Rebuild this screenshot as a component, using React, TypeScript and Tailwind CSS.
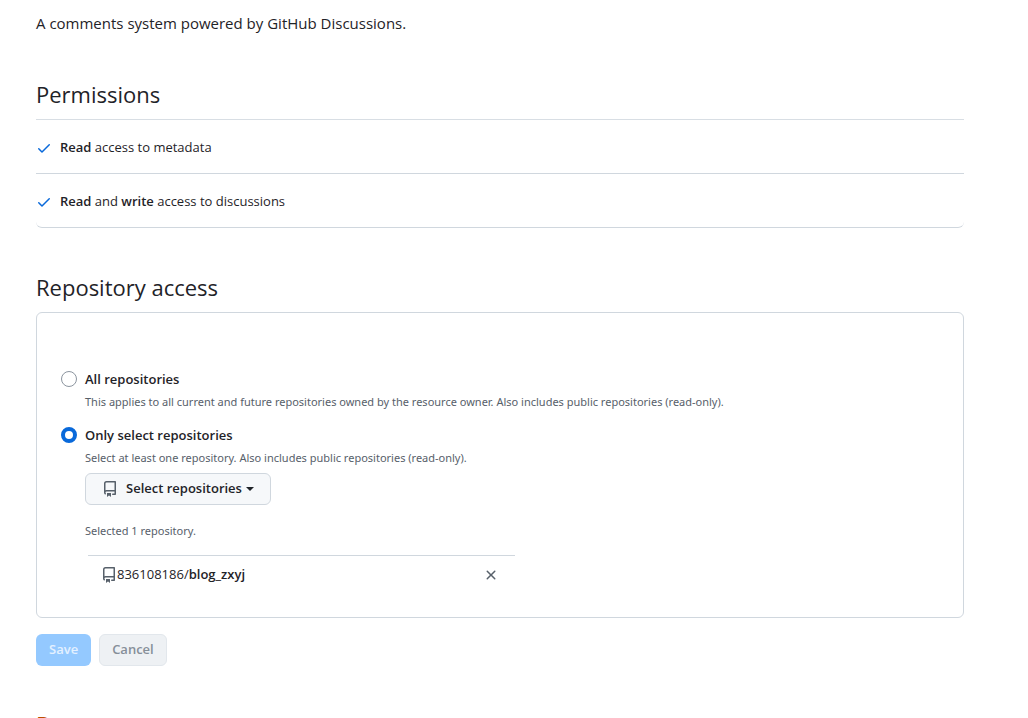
import { useState } from "react";
import type { ReactNode } from "react";

function CheckIcon() {
  return (
    <svg viewBox="0 0 16 16" className="h-4 w-4 shrink-0 fill-[#0969da]" aria-hidden="true">
      <path d="M13.78 4.22a.75.75 0 0 1 0 1.06l-7.25 7.25a.75.75 0 0 1-1.06 0L2.22 9.28a.751.751 0 0 1 .018-1.042.751.751 0 0 1 1.042-.018L6 10.94l6.72-6.72a.75.75 0 0 1 1.06 0Z" />
    </svg>
  );
}

function RepoIcon() {
  return (
    <svg viewBox="0 0 16 16" className="h-4 w-4 shrink-0 fill-[#57606a]" aria-hidden="true">
      <path d="M2 2.5A2.5 2.5 0 0 1 4.5 0h8.75a.75.75 0 0 1 .75.75v12.5a.75.75 0 0 1-.75.75h-2.5a.75.75 0 0 1 0-1.5h1.75v-2h-8a1 1 0 0 0-.714 1.7.75.75 0 1 1-1.072 1.05A2.495 2.495 0 0 1 2 11.5Zm10.5-1h-8a1 1 0 0 0-1 1v6.708A2.486 2.486 0 0 1 4.5 9h8ZM5 12.25a.25.25 0 0 1 .25-.25h3.5a.25.25 0 0 1 .25.25v3.25a.25.25 0 0 1-.4.2l-1.45-1.087a.249.249 0 0 0-.3 0L5.4 15.7a.25.25 0 0 1-.4-.2Z" />
    </svg>
  );
}

function CloseIcon() {
  return (
    <svg viewBox="0 0 16 16" className="h-4 w-4 fill-[#57606a]" aria-hidden="true">
      <path d="M3.72 3.72a.75.75 0 0 1 1.06 0L8 6.94l3.22-3.22a.749.749 0 0 1 1.275.326.749.749 0 0 1-.215.734L9.06 8l3.22 3.22a.749.749 0 0 1-.326 1.275.749.749 0 0 1-.734-.215L8 9.06l-3.22 3.22a.751.751 0 0 1-1.042-.018.751.751 0 0 1-.018-1.042L6.94 8 3.72 4.78a.75.75 0 0 1 0-1.06Z" />
    </svg>
  );
}

function Permission({ children }: { children: ReactNode }) {
  return (
    <li className="flex items-center gap-2 border-b border-[#d0d7de] pt-[17px] pb-[15px] leading-[21px] last:rounded-b-md">
      <CheckIcon />
      <span>{children}</span>
    </li>
  );
}

type AccessOptionProps = {
  id: string;
  label: string;
  note: string;
  checked: boolean;
  onSelect: () => void;
};

function AccessOption({ id, label, note, checked, onSelect }: AccessOptionProps) {
  return (
    <div className="flex items-start gap-2">
      <input
        id={id}
        type="radio"
        name="access"
        checked={checked}
        onChange={onSelect}
        aria-describedby={`${id}-note`}
        className="mt-0.5 h-4 w-4 shrink-0 appearance-none rounded-full border border-[#8c959f] bg-white checked:border-[4px] checked:border-[#0969da]"
      />
      <div>
        <label htmlFor={id} className="block font-semibold leading-[21px]">
          {label}
        </label>
        <p id={`${id}-note`} className="mt-[3px] font-['Noto_Sans',sans-serif] text-[11px] leading-[18px] text-[#57606a]">
          {note}
        </p>
      </div>
    </div>
  );
}

export default function App() {
  const [access, setAccess] = useState("select");

  return (
    <main className="h-screen overflow-hidden bg-white pt-[11px] pr-16 pl-9 font-['Open_Sans',sans-serif] text-[13px] text-[#1f2328]">
      <p className="text-[15px] leading-6">A comments system powered by GitHub Discussions.</p>

      <section className="mt-[43px]">
        <h2 className="border-b border-[#d8dee4] pb-[9px] text-[22px] leading-8">Permissions</h2>
        <ul>
          <Permission>
            <strong className="font-semibold">Read</strong> access to metadata
          </Permission>
          <Permission>
            <strong className="font-semibold">Read</strong> and <strong className="font-semibold">write</strong> access
            to discussions
          </Permission>
        </ul>
      </section>

      <section className="mt-[43px]">
        <h2 className="pb-[9px] text-[22px] leading-8">Repository access</h2>
        <form onSubmit={(e) => e.preventDefault()}>
          <div className="rounded-md border border-[#d0d7de] px-6 pt-14 pb-[23px]">
            <AccessOption
              id="all"
              label="All repositories"
              note="This applies to all current and future repositories owned by the resource owner. Also includes public repositories (read-only)."
              checked={access === "all"}
              onSelect={() => setAccess("all")}
            />
            <div className="mt-[14px]">
              <AccessOption
                id="select"
                label="Only select repositories"
                note="Select at least one repository. Also includes public repositories (read-only)."
                checked={access === "select"}
                onSelect={() => setAccess("select")}
              />
            </div>
            <div className="mt-1.5 pl-6">
              <button
                type="button"
                className="flex h-8 items-center rounded-md border border-[#d0d7de] bg-[#f6f8fa] px-4 font-semibold"
              >
                <RepoIcon />
                <span className="ml-2">Select repositories</span>
                <svg viewBox="0 0 8 4" className="ml-1 h-1 w-2 fill-current" aria-hidden="true">
                  <path d="M0 0h8L4 4Z" />
                </svg>
              </button>
              <p className="mt-[17px] font-['Noto_Sans',sans-serif] text-[11px] leading-[18px] text-[#57606a]">
                Selected 1 repository.
              </p>
              <ul className="mt-[15px] ml-[3px] w-full max-w-[427px] border-t border-[#d0d7de]">
                <li className="flex items-center py-[7px] pr-3 pl-[13px]">
                  <RepoIcon />
                  <span>
                    836108186/<strong className="font-semibold">blog_zxyj</strong>
                  </span>
                  <button type="button" aria-label="Remove blog_zxyj" className="ml-auto p-1">
                    <CloseIcon />
                  </button>
                </li>
              </ul>
            </div>
          </div>
          <div className="mt-4 flex gap-2">
            <button
              type="submit"
              disabled
              className="h-8 rounded-md bg-[#94c9ff] px-[13px] font-semibold text-[#e4f1ff]"
            >
              Save
            </button>
            <button
              type="button"
              disabled
              className="h-8 rounded-md border border-[#e2e7ec] bg-[#eef1f4] px-3 font-semibold text-[#868f99]"
            >
              Cancel
            </button>
          </div>
        </form>
      </section>

      <section className="mt-[42px]">
        <h2 className="text-[22px] leading-8 text-[#bc4c00]">Danger zone</h2>
      </section>
    </main>
  );
}
